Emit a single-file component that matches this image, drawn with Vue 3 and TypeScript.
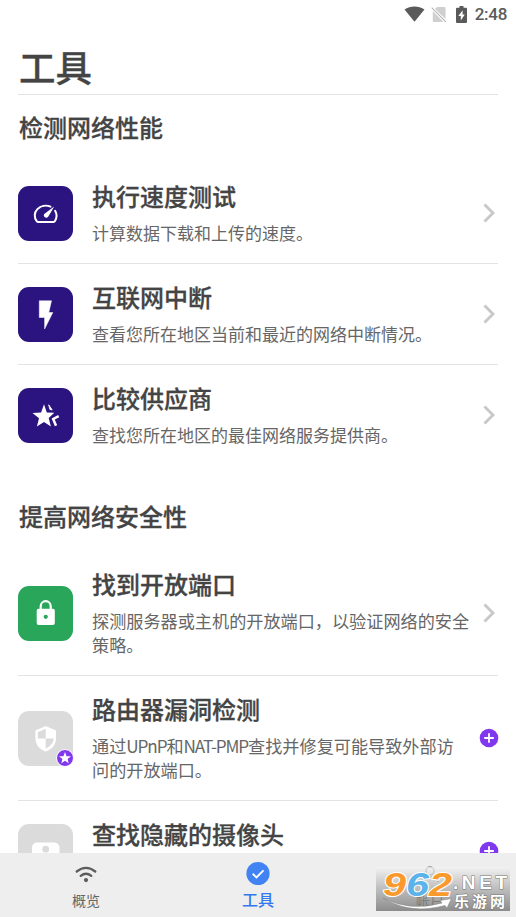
<script setup lang="ts">
interface Tool {
  icon: 'speed' | 'bolt' | 'star' | 'lock' | 'shield' | 'camera'
  tone: 'indigo' | 'green' | 'muted'
  title: string
  lines: string[]
  premium?: boolean
  badge?: boolean
}

interface Section {
  heading: string
  tools: Tool[]
}

interface Run {
  text: string
  latin: boolean
}

const sections: Section[] = [
  {
    heading: '检测网络性能',
    tools: [
      { icon: 'speed', tone: 'indigo', title: '执行速度测试', lines: ['计算数据下载和上传的速度。'] },
      { icon: 'bolt', tone: 'indigo', title: '互联网中断', lines: ['查看您所在地区当前和最近的网络中断情况。'] },
      { icon: 'star', tone: 'indigo', title: '比较供应商', lines: ['查找您所在地区的最佳网络服务提供商。'] },
    ],
  },
  {
    heading: '提高网络安全性',
    tools: [
      { icon: 'lock', tone: 'green', title: '找到开放端口', lines: ['探测服务器或主机的开放端口，以验证网络的安全', '策略。'] },
      { icon: 'shield', tone: 'muted', title: '路由器漏洞检测', lines: ['通过UPnP和NAT-PMP查找并修复可能导致外部访', '问的开放端口。'], premium: true, badge: true },
      { icon: 'camera', tone: 'muted', title: '查找隐藏的摄像头', lines: [], premium: true },
    ],
  },
]

// Latin words inside Chinese copy are set tighter than the ideographs.
function runs(line: string): Run[] {
  return line
    .split(/([A-Za-z-]+)/)
    .filter(Boolean)
    .map((text) => ({ text, latin: /^[A-Za-z-]+$/.test(text) }))
}
</script>

<template>
  <div class="screen">
    <header class="status">
      <svg class="s-wifi" viewBox="0 0 21 16"><path d="M.5 3.600C6.200-.6 14.800-.6 20.500 3.600L10.500 15.800Z" fill="#5a5a5a" /></svg>
      <svg class="s-sim" viewBox="0 0 16 17"><path d="M6 1h7.500q1 0 1 1v11L4 3Z M1.800 5l10.700 11H3q-1.200 0-1.200-1Z" fill="#cfcfcf" /><path d="M.7 1.700l14.200 14.200" stroke="#b5b5b5" stroke-width="1.100" /></svg>
      <svg class="s-battery" viewBox="0 0 11 17"><path d="M3.500 0h4v1.700H10q1 0 1 1V16q0 1-1 1H1q-1 0-1-1V2.700q0-1 1-1h2.500Z" fill="#5a5a5a" /><path d="M6.700 4.200L2.300 10h2.500v4.500L8.800 8.500H6.500Z" fill="#fff" /></svg>
      <span class="time">2:48</span>
    </header>

    <main class="content">
      <h1>工具</h1>
      <section v-for="section in sections" :key="section.heading">
        <h2>{{ section.heading }}</h2>
        <ul>
          <li v-for="tool in section.tools" :key="tool.title" :class="{ tall: tool.lines.length > 1 }">
            <div class="tile" :class="tool.tone">
              <svg v-if="tool.icon === 'speed'" viewBox="0 0 55 55">
                <path d="M32.500 20.700A11 9.800 0 0 0 18.700 35.100Q19 35.900 20 35.900H35.600Q36.500 35.900 37 35A10 10 0 0 0 37.100 24.800" fill="none" stroke="#fff" stroke-width="2" stroke-linecap="round" />
                <path d="M36.200 20.600L30.400 30.500C28.700 33.200 24.500 30.800 26.200 28Z" fill="#fff" />
              </svg>
              <svg v-else-if="tool.icon === 'bolt'" viewBox="0 0 55 55">
                <path d="M21.300 13.800H33.500L30.800 25.500H34.800L26.600 42V30.500H21.300Z" fill="#fff" stroke="#fff" stroke-width=".5" stroke-linejoin="round" />
              </svg>
              <svg v-else-if="tool.icon === 'star'" viewBox="0 0 55 55">
                <path d="M26 16.200L28.800 24.400L36.300 24.700L30.700 30.100L32.900 38.500L26 33.900L18.900 38.600L21 30.200L14.500 24.900L23.100 24.400Z" fill="#fff" />
                <path d="M30.700 16.800L34.200 21.900L31.900 21.500Z" fill="#fff" stroke="#fff" stroke-width=".8" />
                <path d="M40.700 28.200L35.200 31L38 37.800" fill="none" stroke="#fff" stroke-width="2.500" />
              </svg>
              <svg v-else-if="tool.icon === 'lock'" viewBox="0 0 55 55">
                <path d="M22.700 23.500v-3.300a5 5 0 0 1 10 0v3.300" fill="none" stroke="#fff" stroke-width="2.200" />
                <path fill-rule="evenodd" d="M20.600 22.700h14.300q1.900 0 1.900 1.900v12.500q0 1.900-1.900 1.900H20.600q-1.900 0-1.900-1.900V24.600q0-1.900 1.900-1.900Zm7.100 6a2.100 2.100 0 1 0 .1 0Z" fill="#fff" />
              </svg>
              <svg v-else-if="tool.icon === 'shield'" viewBox="0 0 55 55">
                <path d="M27.700 15L38 19.500V27C38 33.700 33.700 38.900 27.700 40.400C21.700 38.900 17.400 33.700 17.400 27V19.500Z" fill="#fff" />
                <path d="M27.700 17.800V27.600H19.800V21.200Z M27.700 27.600H35.700C35.200 32 32.100 36 27.700 37.500Z" fill="#dbdbdb" />
              </svg>
              <svg v-else viewBox="0 0 55 55">
                <rect x="14" y="18.500" width="27.500" height="15" rx="5" fill="#fff" />
                <circle cx="27.700" cy="25.200" r="3.400" fill="#dbdbdb" />
              </svg>
              <svg v-if="tool.badge" class="badge" viewBox="0 0 18 18">
                <circle cx="9" cy="9" r="8.500" fill="#8038ee" stroke="#fff" />
                <path d="M9 3.100L10.600 7.200L15 7.300L11.600 10L12.700 14.200L9 11.800L5.300 14.200L6.400 10L3 7.300L7.400 7.200Z" fill="#fff" />
              </svg>
            </div>
            <div class="text">
              <h3>{{ tool.title }}</h3>
              <p v-for="line in tool.lines" :key="line"><span v-for="(run, i) in runs(line)" :key="i" :class="{ latin: run.latin }">{{ run.text }}</span></p>
              <p v-if="!tool.lines.length">&nbsp;</p>
            </div>
            <svg v-if="tool.premium" class="plus" viewBox="0 0 20 20">
              <circle cx="10" cy="10" r="9.300" fill="#8038ee" />
              <path d="M10 5.200v9.600M5.200 10h9.600" stroke="#fff" stroke-width="1.800" />
            </svg>
            <svg v-else class="chevron" viewBox="0 0 12 20"><path d="M1.500 1.500L10 10L1.500 18.500" fill="none" stroke="#c8c8c8" stroke-width="2.900" /></svg>
          </li>
        </ul>
      </section>
    </main>

    <nav class="tabs">
      <div class="tab">
        <svg viewBox="0 0 28 28">
          <path d="M4.700 11.500Q14 4.200 23.300 11.500M8.700 15.900Q14 11.700 19.300 15.900" fill="none" stroke="#5c5c5c" stroke-width="2.300" stroke-linecap="round" />
          <circle cx="14" cy="20.100" r="2.100" fill="#5c5c5c" />
        </svg>
        <span>概览</span>
      </div>
      <div class="tab active">
        <svg viewBox="0 0 28 28">
          <circle cx="14" cy="13.500" r="11.600" fill="#4283f4" />
          <path d="M8.700 13.800L12.400 17.400L19.500 10.300" fill="none" stroke="#fff" stroke-width="1.900" />
        </svg>
        <span>工具</span>
      </div>
      <div class="tab">
        <svg viewBox="0 0 28 28">
          <circle cx="14" cy="11" r="4" fill="none" stroke="#888" stroke-width="1.600" />
          <path d="M6 22Q6 17 14 17T22 22" fill="none" stroke="#888" stroke-width="1.600" />
        </svg>
        <span>帐户</span>
      </div>
      <svg class="watermark" viewBox="0 0 134 44">
        <defs>
          <linearGradient id="plate" x1="0" y1="0" x2="0" y2="1">
            <stop offset="0" stop-color="#f4f4f4" stop-opacity=".75" />
            <stop offset=".5" stop-color="#a8a8a8" stop-opacity=".7" />
            <stop offset="1" stop-color="#6b6b6b" stop-opacity=".75" />
          </linearGradient>
        </defs>
        <rect width="134" height="44" fill="url(#plate)" />
        <path d="M7 31Q34 45 66 36L64 33.500L75.500 31.500L71 41L69 38.500Q34 48 7 31Z" fill="#fff" stroke="#888" stroke-width=".6" />
        <g class="digits">
          <text x="7" y="28.500" textLength="23" lengthAdjust="spacingAndGlyphs" fill="#fa9a2d">9</text>
          <text x="30" y="28.500" textLength="23" lengthAdjust="spacingAndGlyphs" fill="#5cb3ea">6</text>
          <text x="53" y="28.500" textLength="23" lengthAdjust="spacingAndGlyphs" fill="#fa9a2d">2</text>
        </g>
        <text class="net" x="77" y="22.300" textLength="54">.NET</text>
        <text class="site" x="78" y="39.500" textLength="51">乐游网</text>
      </svg>
    </nav>
  </div>
</template>

<style>
body {
  margin: 0;
  background: #fff;
}
</style>

<style scoped>
.screen {
  display: flex;
  flex-direction: column;
  width: 516px;
  height: 917px;
  overflow: hidden;
  background: #fff;
  color: #444;
  font-family: "Noto Sans CJK SC", sans-serif;
}

h1, h2, h3, p, ul {
  margin: 0;
  padding: 0;
}

.status {
  display: flex;
  flex: none;
  align-items: center;
  justify-content: flex-end;
  height: 28px;
  padding-right: 9px;
}

.s-wifi { width: 21px; height: 16px; margin-right: 6px; }
.s-sim { width: 16px; height: 17px; margin-right: 9px; }
.s-battery { width: 11px; height: 17px; margin-right: 8px; }

.time {
  color: #5a5a5a;
  font: 500 17px/28px Roboto, sans-serif;
  letter-spacing: -0.3px;
}

.content {
  flex: 1;
  min-height: 0;
  overflow: hidden;
  padding: 0 18px;
}

h1, h2, h3 {
  font-weight: 500;
  -webkit-text-stroke: 0.3px #444;
}

h1 {
  height: 66px;
  border-bottom: 1px solid #e3e3e3;
  font-size: 36.500px;
  line-height: 77px;
  text-indent: 1px;
}

h2 {
  height: 68px;
  font-size: 24px;
  line-height: 64px;
  text-indent: 1px;
}

section + section h2 {
  height: 67px;
  margin-top: 18px;
}

ul {
  list-style: none;
}

li {
  display: flex;
  align-items: center;
  box-sizing: border-box;
  height: 101px;
  border-bottom: 1px solid #e3e3e3;
}

li.tall { height: 125px; }
li:last-child { border-bottom-color: transparent; }

.tile {
  position: relative;
  flex: none;
  width: 55px;
  height: 55px;
  border-radius: 11px;
}

.tile > svg:first-child { display: block; width: 55px; height: 55px; }
.indigo { background: #2b147f; }
.green { background: #29a65a; }
.muted { background: #dbdbdb; }

.badge {
  position: absolute;
  right: -1px;
  bottom: -1px;
  width: 18px;
  height: 18px;
}

.text {
  flex: 1;
  min-width: 0;
  margin-left: 19px;
  padding-bottom: 3px;
  white-space: nowrap;
}

h3 {
  margin-bottom: 9px;
  font-size: 24px;
  line-height: 33px;
}

p {
  color: #666;
  font-size: 17px;
  line-height: 24px;
}

.tall p { font-size: 17.150px; }

.latin { letter-spacing: -1.100px; }

.chevron {
  flex: none;
  width: 12px;
  height: 20px;
  margin-right: 3px;
}

.plus {
  flex: none;
  width: 20px;
  height: 20px;
  margin-right: -0.500px;
}

.tabs {
  position: relative;
  display: flex;
  flex: none;
  height: 64px;
  background: #eee;
}

.tab {
  display: flex;
  flex: 1;
  flex-direction: column;
  align-items: center;
  padding-top: 7px;
  color: #666;
  font-size: 14px;
  line-height: 24px;
}

.tab svg { width: 28px; height: 28px; }

.tab.active {
  color: #3478ee;
  font-size: 16px;
  font-weight: 500;
  line-height: 22px;
}

.watermark {
  position: absolute;
  right: 6px;
  bottom: 6px;
  width: 134px;
  height: 44px;
  overflow: visible;
}

.digits {
  font: italic 700 34px "Liberation Sans", sans-serif;
  paint-order: stroke;
  stroke: #fff;
  stroke-width: 2px;
}

.net {
  fill: #fff;
  stroke: #777;
  stroke-width: 1px;
  paint-order: stroke;
  font: 700 19px "Liberation Sans", sans-serif;
}

.site {
  fill: #fff;
  stroke: #777;
  stroke-width: 1px;
  paint-order: stroke;
  font: 700 15px "Noto Sans CJK SC", sans-serif;
}
</style>
